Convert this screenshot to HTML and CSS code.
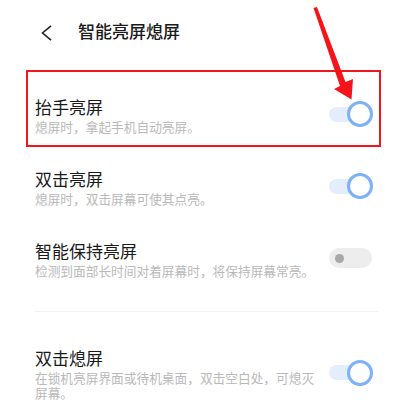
FILE: index.html
```html
<!DOCTYPE html>
<html lang="zh">
<head>
<meta charset="utf-8">
<link rel="stylesheet" href="styles.css">
</head>
<body>
<div class="page">
  <header class="header">
    <svg class="back" width="12" height="16" viewBox="0 0 12 16"><polyline points="10,0.8 1.5,8 10,15.2" fill="none" stroke="#222" stroke-width="1.6" stroke-linejoin="miter"/></svg>
    <h1 class="title">智能亮屏熄屏</h1>
  </header>

  <div class="highlight">
    <div class="row row-in">
      <div class="text">
        <div class="name">抬手亮屏</div>
        <div class="desc">熄屏时，拿起手机自动亮屏。</div>
      </div>
      <div class="toggle on"><span class="track"></span><span class="knob"></span></div>
    </div>
  </div>

  <div class="row">
    <div class="text">
      <div class="name">双击亮屏</div>
      <div class="desc">熄屏时，双击屏幕可使其点亮。</div>
    </div>
    <div class="toggle on"><span class="track"></span><span class="knob"></span></div>
  </div>

  <div class="row">
    <div class="text">
      <div class="name">智能保持亮屏</div>
      <div class="desc">检测到面部长时间对着屏幕时，将保持屏幕常亮。</div>
    </div>
    <div class="toggle off"><span class="track"></span><span class="dot"></span></div>
  </div>

  <div class="divider"></div>

  <div class="row row-last">
    <div class="text">
      <div class="name">双击熄屏</div>
      <div class="desc">在锁机亮屏界面或待机桌面，双击空白处，可熄灭屏幕。</div>
    </div>
    <div class="toggle on"><span class="track"></span><span class="knob"></span></div>
  </div>

  <svg class="arrow" width="409" height="400" viewBox="0 0 409 400"><polygon points="313.5,8 317,7 345.5,82 353,79 351.5,99.5 334,89 340,86" fill="#f5141a"/></svg>
</div>
</body>
</html>
```

FILE: styles.css
```css
html, body {
  margin: 0;
  padding: 0;
  background: #ffffff;
}
body {
  font-family: "Noto Sans CJK SC", "Noto Sans", sans-serif;
  color: #1a1a1a;
  width: 409px;
  height: 400px;
  overflow: hidden;
}
.page {
  position: relative;
  width: 409px;
  height: 400px;
  overflow: hidden;
}
.header {
  height: 62px;
  display: flex;
  align-items: center;
}
.back {
  margin-left: 41px;
  margin-top: 3px;
}
.title {
  margin: 0 0 0 25px;
  font-size: 17px;
  font-weight: 500;
  line-height: 24px;
  color: #1a1a1a;
}
.highlight {
  margin: 8px 28px 3px 26px;
  border: 2px solid #f2161c;
  padding: 22px 6px 11px 7px;
}
.row {
  display: flex;
  align-items: center;
  justify-content: space-between;
  padding: 16px 36px 16px 35px;
}
.row.row-in {
  padding: 0;
}
.row-last {
  padding-top: 16px;
}
.text {
  width: 285px;
}
.name {
  font-size: 17px;
  line-height: 25px;
  color: #1a1a1a;
}
.desc {
  font-size: 12.7px;
  line-height: 15px;
  color: #b9b9b9;
}
.divider {
  height: 1px;
  background: #f2f2f2;
  margin: 17px 31px 17px 35px;
}
.toggle {
  position: relative;
  width: 44px;
  height: 26px;
  flex: none;
}
.toggle.on .track {
  position: absolute;
  left: 0;
  top: 5.5px;
  width: 36px;
  height: 15px;
  border-radius: 8px;
  background: #e3edfd;
}
.toggle.on .knob {
  position: absolute;
  right: 0;
  top: 0;
  width: 20px;
  height: 20px;
  border-radius: 50%;
  border: 3px solid #7db2f6;
  background: #ffffff;
}
.toggle.off .track {
  position: absolute;
  left: 0;
  top: 3px;
  width: 43px;
  height: 20px;
  border-radius: 10px;
  background: #ededed;
}
.toggle.off .dot {
  position: absolute;
  left: 5.5px;
  top: 8.5px;
  width: 9px;
  height: 9px;
  border-radius: 50%;
  background: #a8a8a8;
}
.arrow {
  position: absolute;
  left: 0;
  top: 0;
  pointer-events: none;
}
```
